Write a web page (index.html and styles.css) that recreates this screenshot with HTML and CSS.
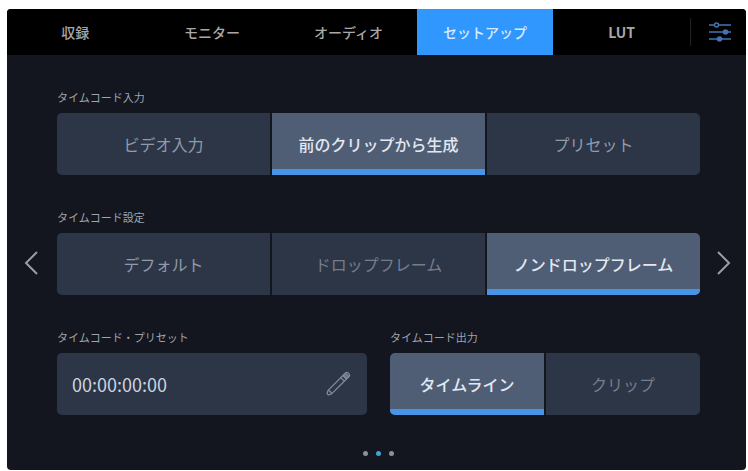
FILE: index.html
```html
<!DOCTYPE html>
<html lang="ja">
<head>
    <meta charset="UTF-8">
    <meta name="viewport" content="width=device-width, initial-scale=1.0">
    <title>セットアップ</title>
    <link rel="stylesheet" href="styles.css">
</head>
<body>
<div class="panel">
    <nav class="tabs">
        <button type="button" class="tab">収録</button>
        <button type="button" class="tab">モニター</button>
        <button type="button" class="tab">オーディオ</button>
        <button type="button" class="tab active">セットアップ</button>
        <button type="button" class="tab latin">LUT</button>
        <button type="button" class="tab-icon" aria-label="設定">
            <svg width="24" height="22" viewBox="0 0 24 22" fill="none" stroke="#4571b5" stroke-width="1.5">
                <path d="M1 4h5M11 4h12M1 11h14M20 11h3M1 18h8M14 18h9"/>
                <circle cx="8.5" cy="4" r="2"/>
                <circle cx="17.5" cy="11" r="2" fill="#4571b5"/>
                <circle cx="11.5" cy="18" r="2" fill="#4571b5"/>
            </svg>
        </button>
    </nav>

    <main class="page">
        <button type="button" class="arrow" aria-label="前へ">
            <svg width="16" height="26" viewBox="0 0 16 26"><path d="M13 2L2 13l11 11"/></svg>
        </button>

        <div class="settings">
            <section class="setting">
                <h2 class="label" id="tc-input">タイムコード入力</h2>
                <div class="segment" role="group" aria-labelledby="tc-input">
                    <button type="button" class="option">ビデオ入力</button>
                    <button type="button" class="option selected" aria-pressed="true">前のクリップから生成</button>
                    <button type="button" class="option">プリセット</button>
                </div>
            </section>

            <section class="setting">
                <h2 class="label" id="tc-mode">タイムコード設定</h2>
                <div class="segment" role="group" aria-labelledby="tc-mode">
                    <button type="button" class="option">デフォルト</button>
                    <button type="button" class="option dim">ドロップフレーム</button>
                    <button type="button" class="option selected" aria-pressed="true">ノンドロップフレーム</button>
                </div>
            </section>

            <div class="row">
                <section class="setting">
                    <label class="label" for="preset">タイムコード・プリセット</label>
                    <div class="field">
                        <input type="text" id="preset" value="00:00:00:00">
                        <button type="button" class="edit" aria-label="編集">
                            <svg width="28" height="28" viewBox="0 0 28 28" fill="none" stroke="#7f8898" stroke-width="1.3" stroke-linejoin="round">
                                <g transform="rotate(45 14 14)">
                                    <path d="M11.500 4.500v21l1.500 3h2l1.500-3v-21z"/>
                                    <path d="M11.500 4.500v-3.500q0-2 2.500-2t2.500 2v3.500zM11.500 7.500h5M11.500 25h5"/>
                                    <path d="M12 1h4v3h-4z" fill="#667082"/>
                                </g>
                            </svg>
                        </button>
                    </div>
                </section>

                <section class="setting">
                    <h2 class="label" id="tc-output">タイムコード出力</h2>
                    <div class="segment" role="group" aria-labelledby="tc-output">
                        <button type="button" class="option selected" aria-pressed="true">タイムライン</button>
                        <button type="button" class="option dim">クリップ</button>
                    </div>
                </section>
            </div>

            <div class="dots">
                <span class="dot"></span>
                <span class="dot current"></span>
                <span class="dot"></span>
            </div>
        </div>

        <button type="button" class="arrow" aria-label="次へ">
            <svg width="16" height="26" viewBox="0 0 16 26"><path d="M3 2l11 11L3 24"/></svg>
        </button>
    </main>
</div>
</body>
</html>
```

FILE: styles.css
```css
* {
    box-sizing: border-box;
}
body {
    margin: 0;
    padding: 9px 2px 1px 7px;
    background-color: #fff;
    font-family: "Noto Sans CJK JP", sans-serif;
}
button, input {
    border: none;
    margin: 0;
    padding: 0;
    background: none;
    font-family: inherit;
    color: inherit;
}
button {
    cursor: pointer;
}
svg {
    display: block;
    overflow: visible;
}
.panel {
    background-color: #13161f;
    border-radius: 4px;
    overflow: hidden;
}

/* top tabs */
.tabs {
    display: flex;
    height: 46px;
    background-color: #000;
}
.tab {
    flex: 1;
    font-size: 14px;
    font-weight: 500;
    color: #a8a8a8;
}
.tab.latin {
    font-weight: 700;
}
.tab.active {
    background-color: #3097fe;
    color: #d5ebff;
}
.tab-icon {
    display: flex;
    align-items: center;
    justify-content: center;
    width: 56px;
    padding-left: 4px;
    background: linear-gradient(#222, #222) left center / 1px 28px no-repeat;
}

/* page */
.page {
    display: grid;
    grid-template-columns: 50px 1fr 46px;
}
.arrow {
    display: flex;
    align-items: center;
    justify-content: center;
}
.arrow path {
    fill: none;
    stroke: #9a9da3;
    stroke-width: 2;
}
.settings {
    display: flex;
    flex-direction: column;
    gap: 34px;
    padding: 34px 0 14px;
}
.row {
    display: grid;
    grid-template-columns: 1fr 1fr;
    gap: 23px;
}
.label {
    display: block;
    margin: 0 0 8px;
    font-size: 11px;
    font-weight: 400;
    line-height: 16px;
    color: #a0a3a9;
}
.segment {
    display: flex;
    gap: 2px;
    height: 62px;
    border-radius: 5px;
    overflow: hidden;
}
.option {
    flex: 1 1 0;
    background-color: #2c3647;
    color: #919aab;
    font-size: 16px;
}
.option.dim {
    color: #747d8e;
}
.option.selected {
    background-color: #4f5d75;
    box-shadow: inset 0 -6px #4694e6;
    color: #e2e8f2;
    font-weight: 500;
}
.field {
    display: flex;
    align-items: center;
    height: 62px;
    padding: 0 15px;
    border-radius: 5px;
    background-color: #2c3647;
}
.field input {
    flex: 1;
    min-width: 0;
    font-size: 18px;
    color: #ccd4e0;
}
.dots {
    display: flex;
    justify-content: center;
    gap: 8px;
    padding-top: 2px;
}
.dot {
    width: 5px;
    height: 5px;
    border-radius: 50%;
    background-color: #8d9094;
}
.dot.current {
    background-color: #42a0d6;
}
```
